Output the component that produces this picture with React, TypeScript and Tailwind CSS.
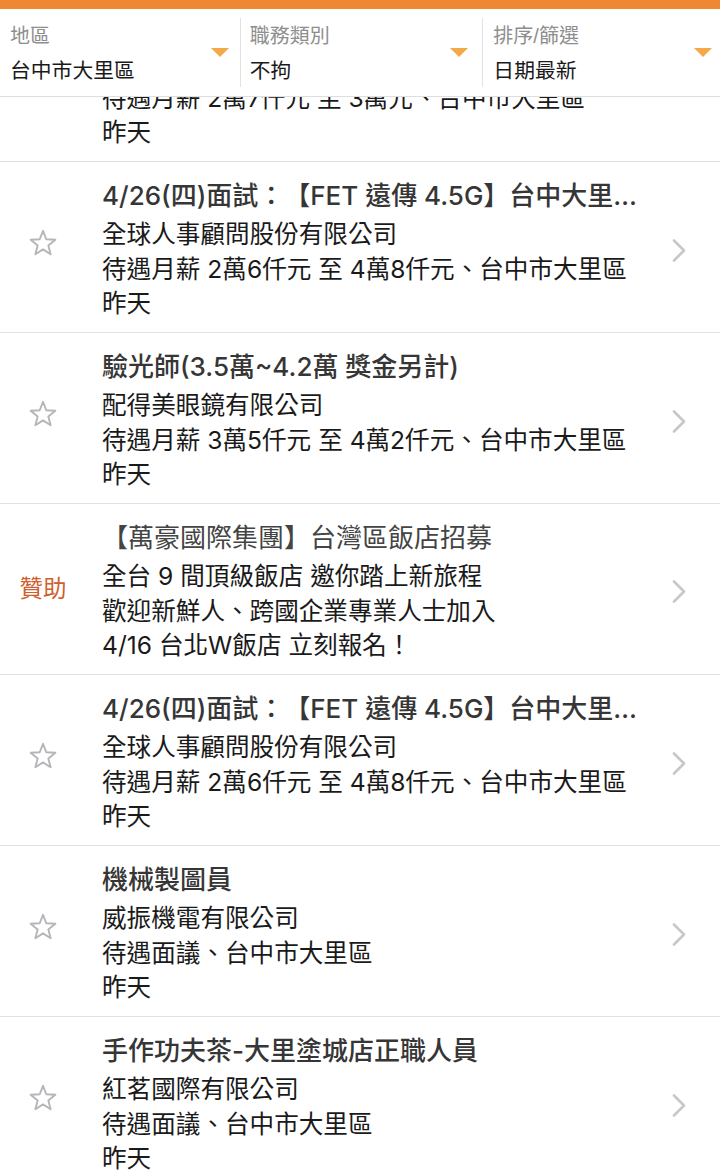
import React from "react";

const FONT = "font-['Liberation_Sans','Noto_Sans_CJK_TC',sans-serif]";
const LIST_FONT = "font-['Inter','Noto_Sans_CJK_TC',sans-serif] [text-spacing-trim:space-all]";

function Triangle() {
  return (
    <svg width="18" height="9" viewBox="0 0 18 9" className="block">
      <path d="M0 0 H18 L9 9 Z" fill="#f3a94a" />
    </svg>
  );
}

function Star() {
  const pts: string[] = [];
  const cx = 14, cy = 14.8, R = 13, r = 5.6;
  for (let i = 0; i < 10; i++) {
    const a = (-90 + i * 36) * (Math.PI / 180);
    const rad = i % 2 === 0 ? R : r;
    pts.push(`${(cx + rad * Math.cos(a)).toFixed(2)},${(cy + rad * Math.sin(a)).toFixed(2)}`);
  }
  return (
    <svg width="28" height="28" viewBox="0 0 28 28" className="block">
      <polygon points={pts.join(" ")} fill="none" stroke="#b5b5ba" strokeWidth="1.9" strokeLinejoin="round" />
    </svg>
  );
}

function Chevron() {
  return (
    <svg width="14" height="23" viewBox="0 0 14 23" className="block">
      <polyline points="2,1.5 12,11.5 2,21.5" fill="none" stroke="#c7c7cc" strokeWidth="2.6" strokeLinecap="round" strokeLinejoin="round" />
    </svg>
  );
}

type Job = {
  title: string;
  lines: string[];
  sponsor?: boolean;
};

const jobs: Job[] = [
  {
    title: "4/26(四)面試：【FET 遠傳 4.5G】台中大里…",
    lines: ["全球人事顧問股份有限公司", "待遇月薪 2萬7仟元 至 3萬元、台中市大里區", "昨天"],
  },
  {
    title: "4/26(四)面試：【FET 遠傳 4.5G】台中大里…",
    lines: ["全球人事顧問股份有限公司", "待遇月薪 2萬6仟元 至 4萬8仟元、台中市大里區", "昨天"],
  },
  {
    title: "驗光師(3.5萬~4.2萬 獎金另計)",
    lines: ["配得美眼鏡有限公司", "待遇月薪 3萬5仟元 至 4萬2仟元、台中市大里區", "昨天"],
  },
  {
    title: "【萬豪國際集團】台灣區飯店招募",
    lines: ["全台 9 間頂級飯店 邀你踏上新旅程", "歡迎新鮮人、跨國企業專業人士加入", "4/16 台北W飯店 立刻報名！"],
    sponsor: true,
  },
  {
    title: "4/26(四)面試：【FET 遠傳 4.5G】台中大里…",
    lines: ["全球人事顧問股份有限公司", "待遇月薪 2萬6仟元 至 4萬8仟元、台中市大里區", "昨天"],
  },
  {
    title: "機械製圖員",
    lines: ["威振機電有限公司", "待遇面議、台中市大里區", "昨天"],
  },
  {
    title: "手作功夫茶-大里塗城店正職人員",
    lines: ["紅茗國際有限公司", "待遇面議、台中市大里區", "昨天"],
  },
];

function Row({ job }: { job: Job }) {
  return (
    <div className="flex h-[171px] shrink-0 items-center border-b border-[#e2e2e4] bg-white">
      {job.sponsor ? (
        <div className="flex w-[86px] justify-center text-[23.5px] leading-[30px] text-[#cf5f2f]">贊助</div>
      ) : (
        <div className="mb-[9px] flex w-[86px] justify-center">
          <Star />
        </div>
      )}
      <div className={`${LIST_FONT} ml-[16px] min-w-0 flex-1 self-stretch pt-[16px]`}>
        <div
          className={
            job.sponsor
              ? "whitespace-nowrap text-[26px] leading-[36px] text-[#444]"
              : "whitespace-nowrap text-[26px] font-medium leading-[36px] text-[#363636]"
          }
        >
          {job.title}
        </div>
        <div className="mt-[3px]">
          {job.lines.map((l, i) => (
            <div key={i} className="whitespace-nowrap text-[24.6px] leading-[34.5px] text-[#1a1a1a]">
              {l}
            </div>
          ))}
        </div>
      </div>
      <div className={job.sponsor ? "mt-[4px] w-[70px] pl-[22px]" : "mt-[6px] w-[70px] pl-[22px]"}>
        <Chevron />
      </div>
    </div>
  );
}

function HeaderCol({ label, value, pl, pr }: { label: string; value: string; pl: string; pr: string }) {
  return (
    <div className={`flex min-w-0 flex-1 ${pl} ${pr}`}>
      <div className="min-w-0 flex-1 pt-[15px]">
        <div className="text-[20px] leading-[24px] text-[#8e8e8e]">{label}</div>
        <div className="mt-[9px] text-[20.8px] leading-[28px] text-[#1a1a1a]">{value}</div>
      </div>
      <div className="mt-[39px]">
        <Triangle />
      </div>
    </div>
  );
}

export default function App() {
  return (
    <div className={`${FONT} h-[1171px] w-[720px] overflow-hidden bg-white`}>
      <div className="h-[9px] bg-[#ef8733]" />
      <div className="flex h-[88px] border-b border-[#dedede] bg-white">
        <HeaderCol label="地區" value="台中市大里區" pl="pl-[10px]" pr="pr-[11px]" />
        <div className="my-[9px] w-px bg-[#e2e2e2]" />
        <HeaderCol label="職務類別" value="不拘" pl="pl-[9px]" pr="pr-[14px]" />
        <div className="my-[9px] w-px bg-[#e2e2e2]" />
        <HeaderCol label="排序/篩選" value="日期最新" pl="pl-[10px]" pr="pr-[8px]" />
      </div>
      <div className="h-[1074px] overflow-hidden">
        <div className="-mt-[106px] flex flex-col">
          {jobs.map((j, i) => (
            <Row key={i} job={j} />
          ))}
        </div>
      </div>
    </div>
  );
}
